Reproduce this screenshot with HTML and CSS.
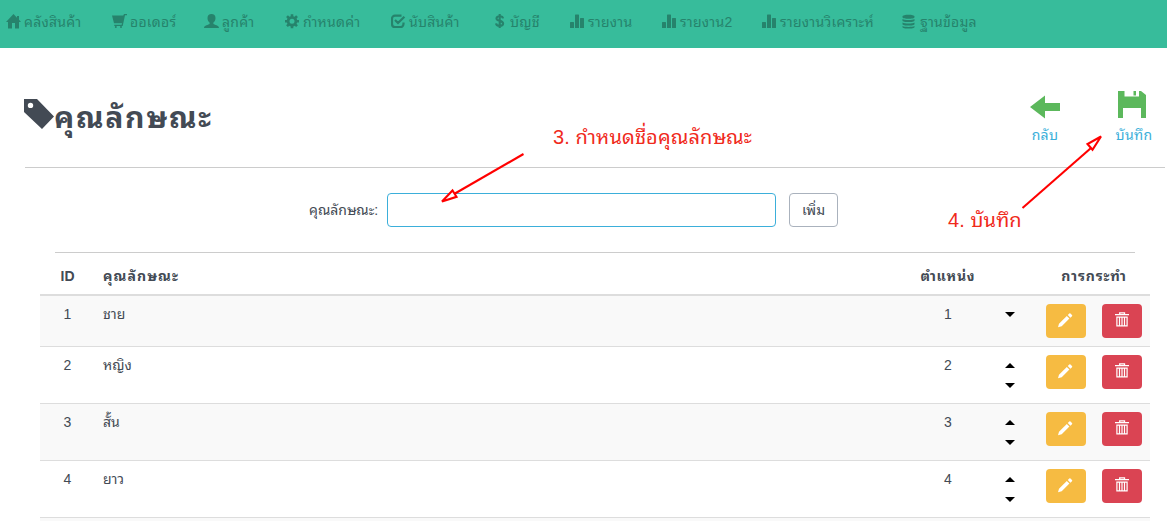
FILE: index.html
```html
<!DOCTYPE html>
<html lang="th">
<head>
<meta charset="utf-8">
<title>คุณลักษณะ</title>
<link rel="stylesheet" href="styles.css">
</head>
<body>
<svg class="defs" width="0" height="0">
  <symbol id="home" viewBox="0 0 15 15"><path d="M7.500 0 0 8h2v6.500h4V9h3v5.500h4V8h2l-2-2.200V2h-2v1.700z"/></symbol>
  <symbol id="cart" viewBox="0 0 15 15"><path d="M0 1.500h11.300L12 0h3v1.300h-2L10.700 12H2.300v-1.200h7.300L10 9.300H2z"/><circle cx="3.800" cy="13" r="1"/><circle cx="9" cy="13" r="1"/></symbol>
  <symbol id="user" viewBox="0 0 15 15"><path d="M7.500 0C5 0 3.500 1.600 3.500 4c0 1.900.8 3.700 2.100 4.600v1.300C4.700 10.800 0 11 0 14h15c0-3-4.700-3.200-5.600-4.100V8.600c1.300-.9 2.100-2.700 2.100-4.600 0-2.400-1.500-4-4-4z"/></symbol>
  <symbol id="gear" viewBox="0 0 15 15"><circle cx="7" cy="7.200" r="3.900" fill="none" stroke="currentColor" stroke-width="2.800"/><g stroke="currentColor" stroke-width="2.600"><path d="M7 .2v2.500M7 11.700v2.500M0 7.200h2.500M11.500 7.200H14M2 2.200l1.800 1.800M10.200 10.400l1.800 1.800M2 12.200l1.800-1.800M10.200 4l1.800-1.800"/></g></symbol>
  <symbol id="check" viewBox="0 0 15 15"><path d="M10.500 1.700H4a3 3 0 0 0-3 3V10a3 3 0 0 0 3 3h5.500a3 3 0 0 0 3-3V8.500M4 6l3 3L13.400 2.700" fill="none" stroke="currentColor" stroke-width="2.200"/></symbol>
  <symbol id="dollar" viewBox="0 0 15 15"><path d="M11 4.300C10.800 2.700 9.500 2.200 7.700 2.200 5.800 2.200 4.500 3 4.500 4.500c0 3.200 6.600 1.500 6.600 5 0 1.600-1.500 2.400-3.400 2.400-2 0-3.500-.7-3.600-2.500M7.700 0v14" fill="none" stroke="currentColor" stroke-width="2.100"/></symbol>
  <symbol id="bars" viewBox="0 0 15 15"><path d="M0 8.500 .5 8H3.500l.5.500V14H0zM5 1l.5-.5h3L9 1v13H5zM10 4.500l.5-.5H13.500l.5.500V14H10z"/></symbol>
  <symbol id="database" viewBox="0 0 15 15"><path d="M.5 2.500C.5.200 12.500.200 12.500 2.500v.7c0 2-12 2-12 0zM.5 5c2 1.300 10 1.300 12 0v1.700c0 1.800-12 1.800-12 0zM.5 8.500c2 1.300 10 1.300 12 0v1.700c0 1.800-12 1.800-12 0zM.5 12c2 1.200 10 1.200 12 0v1.200c0 1.800-12 1.800-12 0z"/></symbol>
  <symbol id="pencil" viewBox="0 0 15 15"><path d="M0 14.300 1 10.800 8.800 3l2.600 2.600L3.700 13.300zM9.800 2 11.300.5q.6-.5 1.200 0L14 2q.5.600 0 1.200L12.400 4.700z"/></symbol>
  <symbol id="trash" viewBox="0 0 14 15"><path d="M0 2.600h14M4.700 2.500V.8h4.800v1.700" fill="none" stroke="currentColor" stroke-width="1.300"/><path d="M1.900 5.100h10.200v8.800H1.900zM4.500 5v9M7 5v9M9.500 5v9" fill="none" stroke="currentColor" stroke-width="1.200"/></symbol>
</svg>

<nav class="navbar">
  <a class="nav-item"><svg class="icon"><use href="#home"/></svg><span>คลังสินค้า</span></a>
  <a class="nav-item"><svg class="icon"><use href="#cart"/></svg><span>ออเดอร์</span></a>
  <a class="nav-item"><svg class="icon"><use href="#user"/></svg><span>ลูกค้า</span></a>
  <a class="nav-item"><svg class="icon"><use href="#gear"/></svg><span>กำหนดค่า</span></a>
  <a class="nav-item"><svg class="icon"><use href="#check"/></svg><span>นับสินค้า</span></a>
  <a class="nav-item"><svg class="icon"><use href="#dollar"/></svg><span>บัญชี</span></a>
  <a class="nav-item"><svg class="icon"><use href="#bars"/></svg><span>รายงาน</span></a>
  <a class="nav-item"><svg class="icon"><use href="#bars"/></svg><span>รายงาน2</span></a>
  <a class="nav-item"><svg class="icon"><use href="#bars"/></svg><span>รายงานวิเคราะห์</span></a>
  <a class="nav-item"><svg class="icon"><use href="#database"/></svg><span>ฐานข้อมูล</span></a>
</nav>

<header class="page-head">
  <h1 class="title"><svg class="tag" viewBox="0 0 30 30"><path fill-rule="evenodd" d="M0 0h13l17 17.500L18 30 0 13zM6.500 3.700a2.700 2.700 0 1 0 0 5.400 2.700 2.700 0 0 0 0-5.400z"/></svg><span>คุณลักษณะ</span></h1>
  <div class="tools">
    <a class="tool"><svg viewBox="0 0 30 30"><path d="M0 17 15 5.500V13h15v8H15v7.500z"/></svg><span>กลับ</span></a>
    <a class="tool save"><svg viewBox="0 0 30 30"><path d="M1 1h6.500v5.500H22V1h2l5 4v23h-5V18H6v10H1zM16.500 1h2.500v4.500h-2.500z"/></svg><span>บันทึก</span></a>
  </div>
</header>

<form class="add-form">
  <label for="attr">คุณลักษณะ:</label>
  <input id="attr" type="text">
  <button type="button">เพิ่ม</button>
</form>

<main class="list">
  <table>
    <colgroup><col class="c-id"><col><col class="c-pos"><col class="c-sort"><col class="c-act"></colgroup>
    <thead><tr><th class="center">ID</th><th class="wide">คุณลักษณะ</th><th class="center"><span class="mid">ตำแหน่ง</span></th><th></th><th class="center"><span class="mid">การกระทำ</span></th></tr></thead>
    <tbody>
      <tr class="first"><td class="center">1</td><td>ชาย</td><td class="center">1</td><td class="sort-cell"><div class="sort"><i class="down"></i></div></td><td><div class="actions"><a class="btn edit"><svg><use href="#pencil"/></svg></a><a class="btn remove"><svg><use href="#trash"/></svg></a></div></td></tr>
      <tr><td class="center">2</td><td>หญิง</td><td class="center">2</td><td class="sort-cell"><div class="sort"><i class="up"></i><i class="down"></i></div></td><td><div class="actions"><a class="btn edit"><svg><use href="#pencil"/></svg></a><a class="btn remove"><svg><use href="#trash"/></svg></a></div></td></tr>
      <tr><td class="center">3</td><td>สั้น</td><td class="center">3</td><td class="sort-cell"><div class="sort"><i class="up"></i><i class="down"></i></div></td><td><div class="actions"><a class="btn edit"><svg><use href="#pencil"/></svg></a><a class="btn remove"><svg><use href="#trash"/></svg></a></div></td></tr>
      <tr><td class="center">4</td><td>ยาว</td><td class="center">4</td><td class="sort-cell"><div class="sort"><i class="up"></i><i class="down"></i></div></td><td><div class="actions"><a class="btn edit"><svg><use href="#pencil"/></svg></a><a class="btn remove"><svg><use href="#trash"/></svg></a></div></td></tr>
      <tr class="last"><td></td><td></td><td></td><td></td><td></td></tr>
    </tbody>
  </table>
</main>

<svg class="notes" viewBox="0 0 1167 521">
  <g class="arrows">
    <path d="M523.500 154 455 193.500"/><path class="tip" d="M442 201.500 452.500 190.500 456.500 196.800z"/>
    <path d="M1022.500 208 1091 148"/><path class="tip" d="M1101 136.500 1087.500 144 1092.500 149.800z"/>
  </g>
  <text class="n1" x="553" y="144">3. กำหนดชื่อคุณลักษณะ</text>
  <text class="n2" x="948" y="227">4. บันทึก</text>
</svg>
</body>
</html>
```
FILE: styles.css
```css
* { box-sizing: border-box; }
body { margin: 0; height: 521px; overflow: hidden; background: #fff; color: #434a54; font: 14px/20px "Liberation Sans", "Noto Sans Thai Looped", Loma, Waree, Garuda, "Noto Sans Thai", "Noto Sans", sans-serif; }
.defs { display: none; }
.navbar { height: 48px; padding-left: 6px; background: #37bc9b; color: #26836c; display: grid; grid-template-columns: 106px 92px 81px 106px 101px 78px 92px 100px 140px 90px; }
.nav-item { display: flex; align-items: center; gap: 3px; padding-bottom: 5px; letter-spacing: .25px; white-space: nowrap; }
.icon { width: 15px; height: 15px; fill: currentColor; }
.page-head { height: 120px; margin: 0 2px 0 25px; border-bottom: 1px solid #ccc; display: flex; justify-content: space-between; }
.title { margin: 51px 0 0 -1px; display: flex; align-items: flex-start; font-size: 30px; line-height: 38px; letter-spacing: 1.75px; }
.tag { width: 30px; height: 30px; fill: #434a54; }
.tools { display: flex; gap: 49px; padding: 42px 11px 0 0; }
.tool { width: 40px; display: flex; flex-direction: column; align-items: center; gap: 5px; color: #3bafda; letter-spacing: .3px; white-space: nowrap; }
.tool svg { width: 30px; height: 30px; fill: #5cb85c; }
.save svg { margin-left: -4px; }
.add-form { height: 84px; padding: 25px 0 0 309px; display: flex; align-items: flex-start; }
.add-form label { width: 78px; line-height: 34px; white-space: nowrap; }
.add-form input { width: 389px; height: 34px; border: 1px solid #3bafda; border-radius: 4px; }
.add-form button { width: 49px; height: 34px; margin-left: 13px; padding: 0; border: 1px solid #aab2bd; border-radius: 4px; background: #fff; color: #434a54; font: inherit; }
.list { margin: 0 17px 0 40px; }
.list::before { content: ""; display: block; height: 1px; margin: 0 15px; background: #ccc; }
table { width: 1110px; table-layout: fixed; border-collapse: separate; border-spacing: 0; }
.c-id { width: 55px; }
.c-pos { width: 106px; }
.c-sort { width: 37px; }
.c-act { width: 112px; }
th { height: 43px; padding: 4px 8px 0; text-align: left; border-bottom: 2px solid #ddd; white-space: nowrap; }
td { height: 57px; padding: 8px; vertical-align: top; border-top: 1px solid #ddd; }
.wide { letter-spacing: 1.1px; }
.mid { letter-spacing: .8px; }
.first td { height: 50px; border-top: 0; }
.last td { height: 4px; padding: 0; }
tbody tr:nth-child(odd) { background: #f9f9f9; }
.center { text-align: center; padding-left: 0; padding-right: 0; }
.sort-cell { padding-left: 3px; }
.sort { width: 12px; display: flex; flex-direction: column; align-items: center; gap: 15px; padding-top: 8px; }
.sort i { width: 10px; height: 5px; background: #000; }
.up { clip-path: polygon(50% 0, 100% 100%, 0 100%); }
.down { clip-path: polygon(0 0, 100% 0, 50% 100%); }
.actions { display: flex; gap: 16px; }
.btn { width: 40px; height: 34px; padding: 9px 0 0 12px; border-radius: 4px; color: #fff; }
.btn svg { display: block; width: 15px; height: 15px; fill: currentColor; }
.remove { padding: 8px 0 0 13px; background: #da4453; }
.remove svg { width: 14px; }
.edit { background: #f6bb42; }
.notes { position: absolute; inset: 0; width: 1167px; height: 521px; pointer-events: none; fill: #f02a1c; font-size: 20px; letter-spacing: .1px; }
.arrows { stroke: #f00; stroke-width: 2.1; fill: none; }
.arrows .tip { fill: #fff; }
```
